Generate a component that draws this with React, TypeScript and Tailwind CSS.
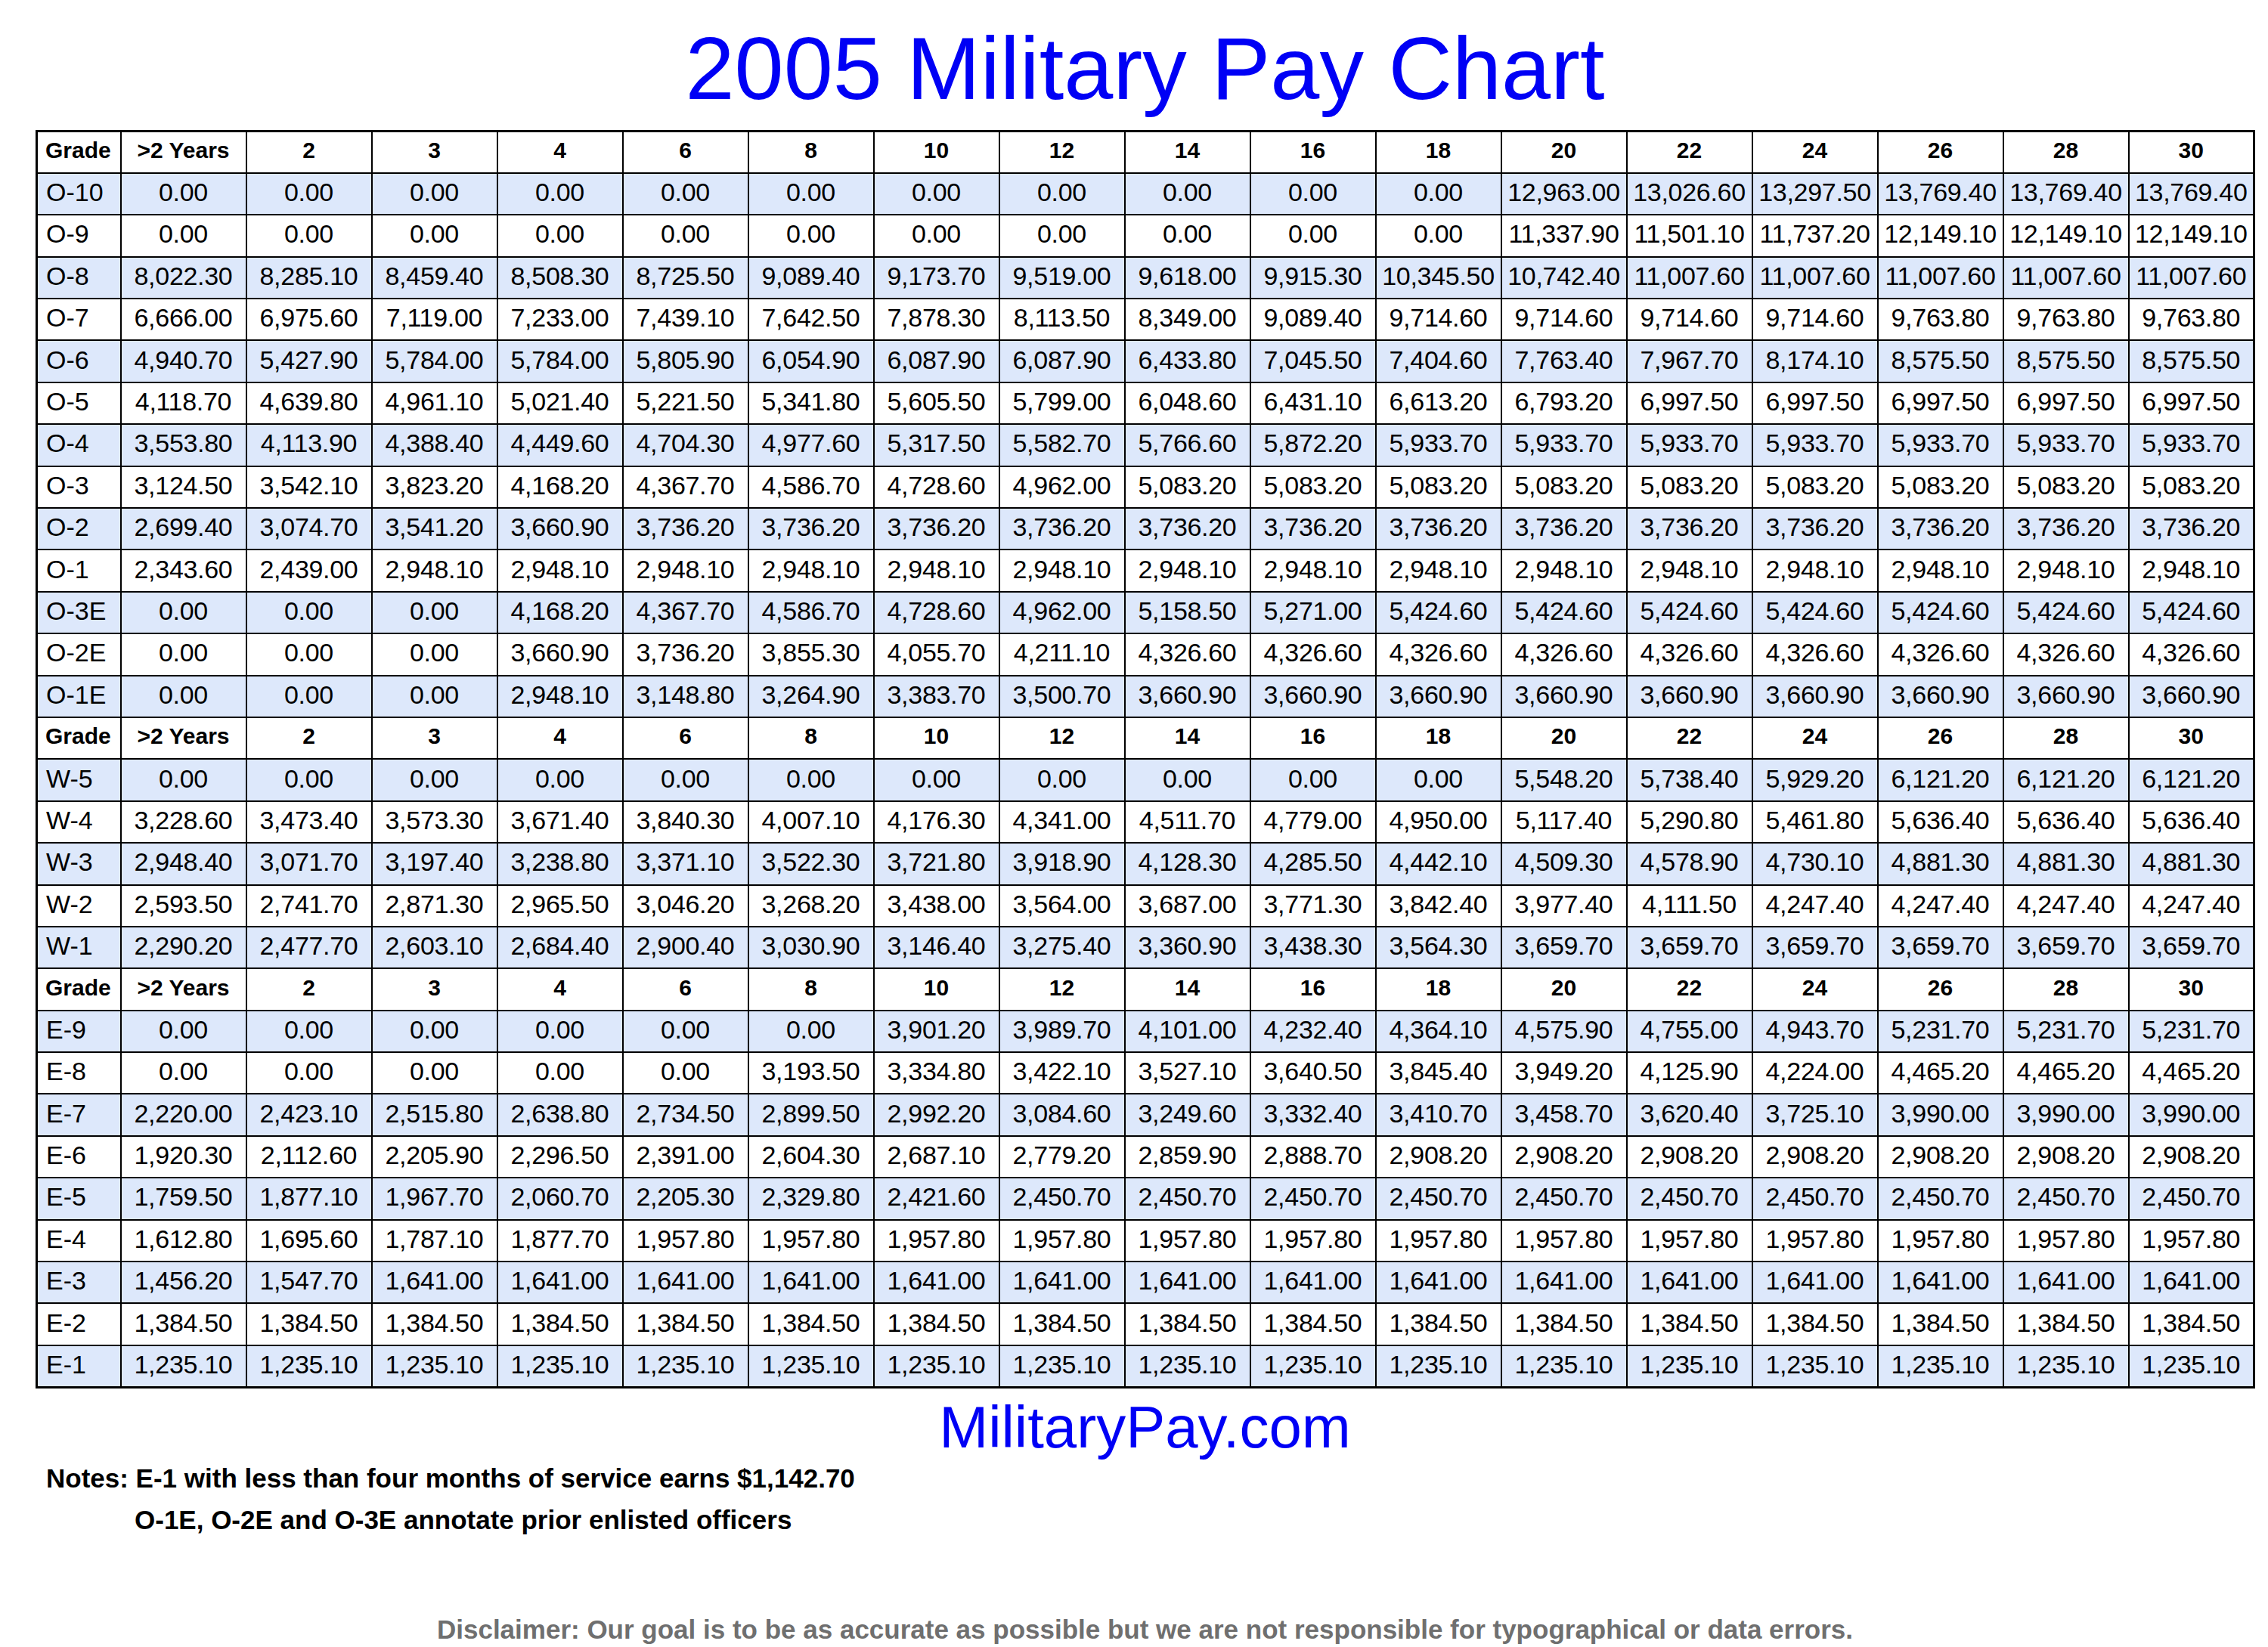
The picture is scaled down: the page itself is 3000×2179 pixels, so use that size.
const HEADERS = ['Grade', '>2 Years', '2', '3', '4', '6', '8', '10', '12', '14', '16', '18', '20', '22', '24', '26', '28', '30']

const rep = (v: string, n: number) => Array(n).fill(v) as string[]

type Row = { grade: string; pay: string[] }

const officers: Row[] = [
  { grade: 'O-10', pay: [...rep('0.00', 11), '12,963.00', '13,026.60', '13,297.50', ...rep('13,769.40', 3)] },
  { grade: 'O-9', pay: [...rep('0.00', 11), '11,337.90', '11,501.10', '11,737.20', ...rep('12,149.10', 3)] },
  { grade: 'O-8', pay: ['8,022.30', '8,285.10', '8,459.40', '8,508.30', '8,725.50', '9,089.40', '9,173.70', '9,519.00', '9,618.00', '9,915.30', '10,345.50', '10,742.40', ...rep('11,007.60', 5)] },
  { grade: 'O-7', pay: ['6,666.00', '6,975.60', '7,119.00', '7,233.00', '7,439.10', '7,642.50', '7,878.30', '8,113.50', '8,349.00', '9,089.40', ...rep('9,714.60', 4), ...rep('9,763.80', 3)] },
  { grade: 'O-6', pay: ['4,940.70', '5,427.90', '5,784.00', '5,784.00', '5,805.90', '6,054.90', '6,087.90', '6,087.90', '6,433.80', '7,045.50', '7,404.60', '7,763.40', '7,967.70', '8,174.10', ...rep('8,575.50', 3)] },
  { grade: 'O-5', pay: ['4,118.70', '4,639.80', '4,961.10', '5,021.40', '5,221.50', '5,341.80', '5,605.50', '5,799.00', '6,048.60', '6,431.10', '6,613.20', '6,793.20', ...rep('6,997.50', 5)] },
  { grade: 'O-4', pay: ['3,553.80', '4,113.90', '4,388.40', '4,449.60', '4,704.30', '4,977.60', '5,317.50', '5,582.70', '5,766.60', '5,872.20', ...rep('5,933.70', 7)] },
  { grade: 'O-3', pay: ['3,124.50', '3,542.10', '3,823.20', '4,168.20', '4,367.70', '4,586.70', '4,728.60', '4,962.00', ...rep('5,083.20', 9)] },
  { grade: 'O-2', pay: ['2,699.40', '3,074.70', '3,541.20', '3,660.90', ...rep('3,736.20', 13)] },
  { grade: 'O-1', pay: ['2,343.60', '2,439.00', ...rep('2,948.10', 15)] },
  { grade: 'O-3E', pay: [...rep('0.00', 3), '4,168.20', '4,367.70', '4,586.70', '4,728.60', '4,962.00', '5,158.50', '5,271.00', ...rep('5,424.60', 7)] },
  { grade: 'O-2E', pay: [...rep('0.00', 3), '3,660.90', '3,736.20', '3,855.30', '4,055.70', '4,211.10', ...rep('4,326.60', 9)] },
  { grade: 'O-1E', pay: [...rep('0.00', 3), '2,948.10', '3,148.80', '3,264.90', '3,383.70', '3,500.70', ...rep('3,660.90', 9)] },
]

const warrant: Row[] = [
  { grade: 'W-5', pay: [...rep('0.00', 11), '5,548.20', '5,738.40', '5,929.20', ...rep('6,121.20', 3)] },
  { grade: 'W-4', pay: ['3,228.60', '3,473.40', '3,573.30', '3,671.40', '3,840.30', '4,007.10', '4,176.30', '4,341.00', '4,511.70', '4,779.00', '4,950.00', '5,117.40', '5,290.80', '5,461.80', ...rep('5,636.40', 3)] },
  { grade: 'W-3', pay: ['2,948.40', '3,071.70', '3,197.40', '3,238.80', '3,371.10', '3,522.30', '3,721.80', '3,918.90', '4,128.30', '4,285.50', '4,442.10', '4,509.30', '4,578.90', '4,730.10', ...rep('4,881.30', 3)] },
  { grade: 'W-2', pay: ['2,593.50', '2,741.70', '2,871.30', '2,965.50', '3,046.20', '3,268.20', '3,438.00', '3,564.00', '3,687.00', '3,771.30', '3,842.40', '3,977.40', '4,111.50', ...rep('4,247.40', 4)] },
  { grade: 'W-1', pay: ['2,290.20', '2,477.70', '2,603.10', '2,684.40', '2,900.40', '3,030.90', '3,146.40', '3,275.40', '3,360.90', '3,438.30', '3,564.30', ...rep('3,659.70', 6)] },
]

const enlisted: Row[] = [
  { grade: 'E-9', pay: [...rep('0.00', 6), '3,901.20', '3,989.70', '4,101.00', '4,232.40', '4,364.10', '4,575.90', '4,755.00', '4,943.70', ...rep('5,231.70', 3)] },
  { grade: 'E-8', pay: [...rep('0.00', 5), '3,193.50', '3,334.80', '3,422.10', '3,527.10', '3,640.50', '3,845.40', '3,949.20', '4,125.90', '4,224.00', ...rep('4,465.20', 3)] },
  { grade: 'E-7', pay: ['2,220.00', '2,423.10', '2,515.80', '2,638.80', '2,734.50', '2,899.50', '2,992.20', '3,084.60', '3,249.60', '3,332.40', '3,410.70', '3,458.70', '3,620.40', '3,725.10', ...rep('3,990.00', 3)] },
  { grade: 'E-6', pay: ['1,920.30', '2,112.60', '2,205.90', '2,296.50', '2,391.00', '2,604.30', '2,687.10', '2,779.20', '2,859.90', '2,888.70', ...rep('2,908.20', 7)] },
  { grade: 'E-5', pay: ['1,759.50', '1,877.10', '1,967.70', '2,060.70', '2,205.30', '2,329.80', '2,421.60', ...rep('2,450.70', 10)] },
  { grade: 'E-4', pay: ['1,612.80', '1,695.60', '1,787.10', '1,877.70', ...rep('1,957.80', 13)] },
  { grade: 'E-3', pay: ['1,456.20', '1,547.70', ...rep('1,641.00', 15)] },
  { grade: 'E-2', pay: rep('1,384.50', 17) },
  { grade: 'E-1', pay: rep('1,235.10', 17) },
]

function HeaderRow() {
  return (
    <tr className="h-[55.4px] bg-white">
      {HEADERS.map((h, i) => (
        <th
          key={h}
          className={`border-2 border-black p-0 pb-[5px] text-[30px] font-bold leading-none ${i === 0 ? 'pl-[10px] text-left' : 'text-center'}`}
        >
          {h}
        </th>
      ))}
    </tr>
  )
}

function Section({ rows }: { rows: Row[] }) {
  return (
    <>
      <HeaderRow />
      {rows.map((r, idx) => (
        <tr key={r.grade} className={`h-[55.4px] ${idx % 2 === 0 ? 'bg-[#dde8fb]' : 'bg-white'}`}>
          <td className="border-2 border-black p-0 pb-[5px] pl-[11px] text-left text-[34px] leading-none">{r.grade}</td>
          {r.pay.map((v, i) => (
            <td key={i} className="border-2 border-black p-0 pb-[5px] text-center text-[34px] leading-none whitespace-nowrap tracking-[-0.3px]">
              {v}
            </td>
          ))}
        </tr>
      ))}
    </>
  )
}

export default function App() {
  return (
    <div className="w-[3000px] h-[2179px] bg-white text-black font-['Liberation_Sans',Arial,sans-serif] overflow-hidden">
      {/* Title */}
      <div className="ml-[47px] w-[2935px] h-[172px] pt-[32px] text-center">
        <h1 className="text-[117px] leading-none text-[#0000f5] font-normal">2005 Military Pay Chart</h1>
      </div>

      {/* Pay table */}
      <table className="ml-[47px] w-[2935px] table-fixed border-collapse border-[3px] border-black">
        <colgroup>
          <col className="w-[111px]" />
          {HEADERS.slice(1).map(h => (
            <col key={h} className="w-[166px]" />
          ))}
        </colgroup>
        <tbody>
          <Section rows={officers} />
          <Section rows={warrant} />
          <Section rows={enlisted} />
        </tbody>
      </table>

      <div className="ml-[47px] w-[2935px] mt-[12px] text-center text-[78px] leading-none text-[#0000f5]">
        MilitaryPay.com
      </div>

      {/* Notes */}
      <div className="mt-[11px] pl-[61px] text-[35px] font-bold leading-none">
        <p>Notes: E-1 with less than four months of service earns $1,142.70</p>
        <p className="mt-[20px] pl-[117px]">O-1E, O-2E and O-3E annotate prior enlisted officers</p>
      </div>

      <div className="ml-[47px] w-[2935px] mt-[110px] text-center text-[35px] font-bold leading-none text-[#6f6f6f]">
        Disclaimer: Our goal is to be as accurate as possible but we are not responsible for typographical or data errors.
      </div>
    </div>
  )
}
